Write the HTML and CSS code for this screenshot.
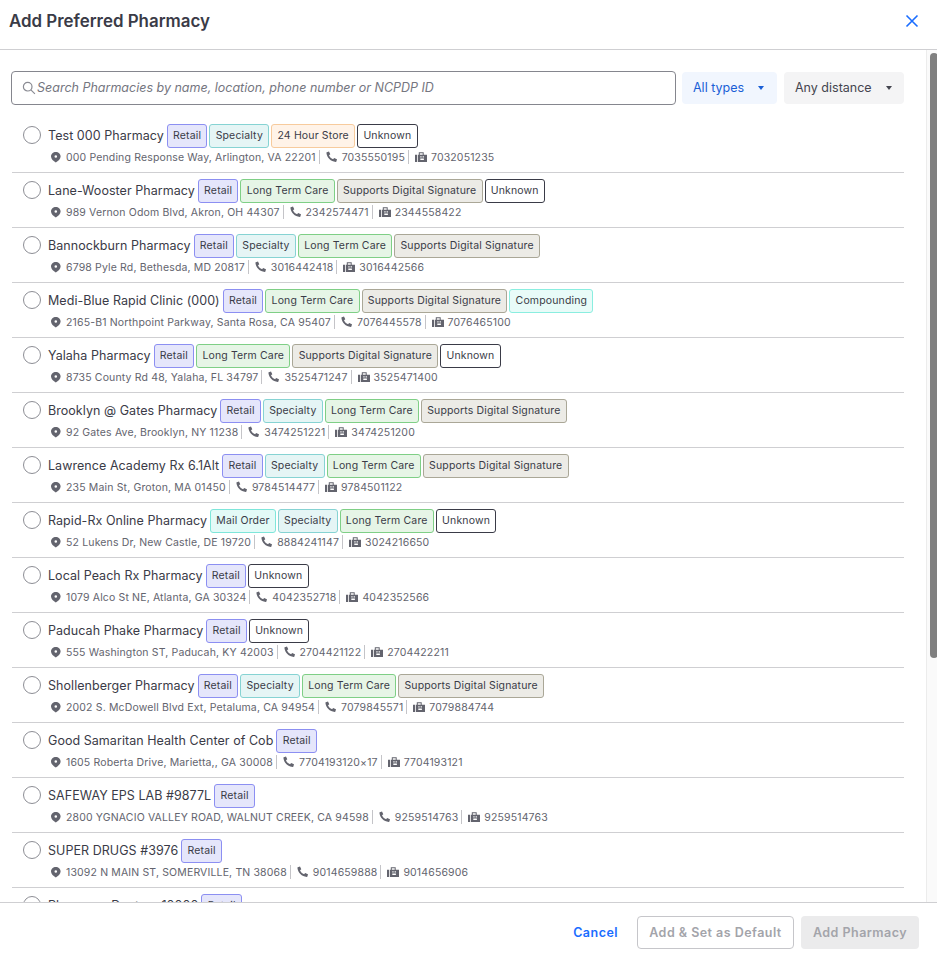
FILE: index.html
```html
<!DOCTYPE html>
<html lang="en">
<head>
<meta charset="utf-8">
<title>Add Preferred Pharmacy</title>
<link rel="stylesheet" href="styles.css">
</head>
<body>
<svg class="sprites" width="0" height="0" aria-hidden="true">
  <symbol id="i-pin" viewBox="0 0 12 12"><path fill-rule="evenodd" d="M5.800 1C3.200 1 1 3 1 5.500c0 2.600 2.500 4.500 4.800 6 2.300-1.500 4.800-3.400 4.800-6C10.600 3 8.400 1 5.800 1zm0 3.200a1.300 1.300 0 1 1 0 2.600 1.300 1.300 0 0 1 0-2.600z"/></symbol>
  <symbol id="i-phone" viewBox="0 0 12 12"><path d="M.8 1.200 3 .6l1.300 2.700-1.300 1c.7 1.800 2.200 3.300 4.100 4l1-1.300 2.900 1.300-.6 2.200c-.1.300-.3.400-.6.400C4.800 10.700.9 6.800.4 1.800c0-.3.100-.5.400-.6z"/></symbol>
  <symbol id="i-fax" viewBox="0 0 12 12"><path fill-rule="evenodd" d="M0 3.800h2V11H0zM2.800 3.800h1V1.200h4.900v2.600H12V11H2.800zM4.800 2.200v1.600h2.900V2.200zM5.300 5.300v1.300h1.300V5.300zm2.300 0v1.300h1.300V5.300zM5.300 7.600v1.400h3.600V7.600z"/></symbol>
</svg>
<div class="dialog">
  <header class="head">
    <h1 class="title">Add Preferred Pharmacy</h1>
    <button class="close" aria-label="Close"><svg viewBox="0 0 14 14" width="14" height="14"><path d="M1.500 1.500l11 11M12.500 1.500l-11 11"/></svg></button>
  </header>
  <div class="middle">
    <main class="content">
      <div class="filters">
        <label class="search">
          <svg class="search-icon" viewBox="0 0 14 14" width="14" height="14"><circle cx="5.700" cy="5.700" r="4.300"/><path d="M8.900 8.900l4 4"/></svg>
          <span class="placeholder">Search Pharmacies by name, location, phone number or NCPDP ID</span>
        </label>
        <button class="drop drop-types">All types<i class="caret"></i></button>
        <button class="drop drop-dist">Any distance<i class="caret"></i></button>
      </div>
      <ul class="list" id="list"></ul>
    </main>
    <div class="scrollbar"><div class="thumb"></div></div>
  </div>
  <footer class="foot">
    <button class="btn-cancel">Cancel</button>
    <button class="btn-outline">Add &amp; Set as Default</button>
    <button class="btn-solid">Add Pharmacy</button>
  </footer>
</div>
<script src="app.js"></script>
</body>
</html>
```
FILE: styles.css
```css
* { box-sizing: border-box; }
html, body { margin: 0; height: 100%; overflow: hidden; }
body { font-family: Inter, "Liberation Sans", sans-serif; background: #fff; color: #33343f; }
.sprites { position: absolute; }
button { font-family: inherit; cursor: pointer; }
.dialog { height: 964px; display: flex; flex-direction: column; }
.head { height: 50px; flex: none; border-bottom: 1px solid #cfcfd2; display: flex; align-items: center; justify-content: space-between; padding: 0 18px 8px 9px; }
.title { margin: 0; font-size: 16.900px; line-height: 24px; font-weight: 600; color: #3a3b47; }
.close { border: 0; background: none; padding: 0; width: 14px; height: 14px; display: block; }
.close svg { display: block; }
.close path { stroke: #1a6dff; stroke-width: 1.6; fill: none; }
.middle { flex: 1; min-height: 0; display: flex; overflow: hidden; }
.content { flex: 1; min-width: 0; padding: 21px 22px 0 11px; overflow: hidden; }
.filters { display: flex; align-items: center; height: 34px; }
.search { width: 665px; height: 34px; border: 1px solid #85868e; border-radius: 4px; display: flex; align-items: center; padding: 0 0 1px 10px; }
.search-icon { flex: none; }
.search-icon circle, .search-icon path { fill: none; stroke: #8a8b93; stroke-width: 1.2; }
.placeholder { margin-left: 1px; font-size: 12.500px; font-style: italic; color: #75767f; white-space: nowrap; }
.drop { height: 32px; border: 0; border-radius: 4px; padding: 0 12px 1px 11px; font-size: 12.500px; display: flex; align-items: center; justify-content: space-between; }
.drop-types { width: 95px; margin-left: 6px; padding-right: 13px; background: #f1f6fe; color: #1a5fd6; }
.drop-dist { width: 120px; margin-left: 7px; background: #f4f4f5; color: #44454f; }
.caret { width: 0; height: 0; border: 3.500px solid transparent; border-top: 4px solid currentColor; border-bottom: 0; }
.list { list-style: none; margin: 13px 0 0 1px; padding: 0; width: 892px; }
.row { height: 55px; border-bottom: 1px solid #cfcfd2; padding: 6px 0 0 11px; display: grid; grid-template-columns: 18px 1fr; grid-template-rows: 24px 14px; row-gap: 2px; column-gap: 7px; }
.radio { width: 18px; height: 18px; margin-top: 2px; border: 1px solid #8d8e95; border-radius: 50%; background: #fff; }
.line { display: flex; align-items: center; height: 24px; }
.name { font-size: 12.500px; letter-spacing: .05px; color: #3a3b47; margin: 0 3px 1px 0; white-space: nowrap; }
.tag { height: 23.500px; margin-right: 2px; padding: 0 5.250px; border: 1px solid; border-radius: 3px; font-size: 10.500px; letter-spacing: .15px; line-height: 21px; white-space: nowrap; color: #3a3b47; }
.t-retail { background: #e5e6fb; border-color: #8c8ff2; }
.t-specialty { background: #e5f5f5; border-color: #86d3d3; }
.t-store { background: #fff3e8; border-color: #f7cb9d; }
.t-unknown { background: #fff; border-color: #3a3b47; }
.t-ltc { background: #e6f5e6; border-color: #7fcf86; }
.t-digital { background: #ecebe6; border-color: #aaa797; }
.t-mail { background: #e3faf7; border-color: #7ee6da; }
.t-comp { background: #e8fbf8; border-color: #8aeee0; }
.sub { grid-column: 2; display: flex; align-items: center; height: 14px; padding-left: 2px; font-size: 10.500px; letter-spacing: .15px; color: #63646e; white-space: nowrap; }
.icon { width: 12px; height: 12px; fill: #63646e; flex: none; margin-right: 4px; }
.sub-part { display: flex; align-items: center; height: 14px; padding-right: 3px; margin-right: 6px; border-right: 1px solid #c4c4c8; }
.sub-part:last-child { border: 0; margin: 0; }
.scrollbar { width: 11px; flex: none; background: #fafafa; border-left: 1px solid #ececec; padding: 3px 0 0 3px; }
.thumb { width: 8px; height: 605px; background: #808080; border-radius: 4px; }
.foot { height: 62px; flex: none; border-top: 1px solid #cfcfd2; display: flex; align-items: center; justify-content: flex-end; padding: 0 18px 2px 0; font-size: 12.500px; font-weight: 600; letter-spacing: .47px; }
.foot button { font-size: inherit; font-weight: inherit; letter-spacing: inherit; height: 33px; border-radius: 4px; }
.btn-cancel { border: 0; background: none; color: #1a6dff; padding: 0; margin-right: 19px; }
.btn-outline { border: 1px solid #c6c6ca; background: #fff; color: #a3a4aa; width: 157px; margin-right: 7px; }
.btn-solid { border: 0; background: #ebebec; color: #a3a4aa; width: 118px; }
```
FILE: app.js
```js
var T = {
  R: ['Retail', 't-retail'], S: ['Specialty', 't-specialty'], H: ['24 Hour Store', 't-store'],
  U: ['Unknown', 't-unknown'], L: ['Long Term Care', 't-ltc'], D: ['Supports Digital Signature', 't-digital'],
  M: ['Mail Order', 't-mail'], C: ['Compounding', 't-comp']
};
var rows = [
  ['Test 000 Pharmacy', 'RSHU', '000 Pending Response Way, Arlington, VA 22201', '7035550195', '7032051235'],
  ['Lane-Wooster Pharmacy', 'RLDU', '989 Vernon Odom Blvd, Akron, OH 44307', '2342574471', '2344558422'],
  ['Bannockburn Pharmacy', 'RSLD', '6798 Pyle Rd, Bethesda, MD 20817', '3016442418', '3016442566'],
  ['Medi-Blue Rapid Clinic (000)', 'RLDC', '2165-B1 Northpoint Parkway, Santa Rosa, CA 95407', '7076445578', '7076465100'],
  ['Yalaha Pharmacy', 'RLDU', '8735 County Rd 48, Yalaha, FL 34797', '3525471247', '3525471400'],
  ['Brooklyn @ Gates Pharmacy', 'RSLD', '92 Gates Ave, Brooklyn, NY 11238', '3474251221', '3474251200'],
  ['Lawrence Academy Rx 6.1Alt', 'RSLD', '235 Main St, Groton, MA 01450', '9784514477', '9784501122'],
  ['Rapid-Rx Online Pharmacy', 'MSLU', '52 Lukens Dr, New Castle, DE 19720', '8884241147', '3024216650'],
  ['Local Peach Rx Pharmacy', 'RU', '1079 Alco St NE, Atlanta, GA 30324', '4042352718', '4042352566'],
  ['Paducah Phake Pharmacy', 'RU', '555 Washington ST, Paducah, KY 42003', '2704421122', '2704422211'],
  ['Shollenberger Pharmacy', 'RSLD', '2002 S. McDowell Blvd Ext, Petaluma, CA 94954', '7079845571', '7079884744'],
  ['Good Samaritan Health Center of Cob', 'R', '1605 Roberta Drive, Marietta,, GA 30008', '7704193120×17', '7704193121'],
  ['SAFEWAY EPS LAB #9877L', 'R', '2800 YGNACIO VALLEY ROAD, WALNUT CREEK, CA 94598', '9259514763', '9259514763'],
  ['SUPER DRUGS #3976', 'R', '13092 N MAIN ST, SOMERVILLE, TN 38068', '9014659888', '9014656906'],
  ['Pharmacy Doctors 10000', 'R', '', '', '']
];
function el(tag, cls, text) {
  var e = document.createElement(tag);
  e.className = cls;
  if (text) e.textContent = text;
  return e;
}
function part(icon, text) {
  var p = el('span', 'sub-part');
  p.innerHTML = '<svg class="icon"><use href="#i-' + icon + '"></use></svg>';
  p.appendChild(document.createTextNode(text));
  return p;
}
var list = document.getElementById('list');
rows.forEach(function (r) {
  var li = el('li', 'row');
  li.appendChild(el('span', 'radio'));
  var line = el('div', 'line');
  line.appendChild(el('span', 'name', r[0]));
  r[1].split('').forEach(function (k) {
    line.appendChild(el('span', 'tag ' + T[k][1], T[k][0]));
  });
  li.appendChild(line);
  if (r[2]) {
    var sub = el('div', 'sub');
    sub.appendChild(part('pin', r[2]));
    sub.appendChild(part('phone', r[3]));
    sub.appendChild(part('fax', r[4]));
    li.appendChild(sub);
  }
  list.appendChild(li);
});
```
